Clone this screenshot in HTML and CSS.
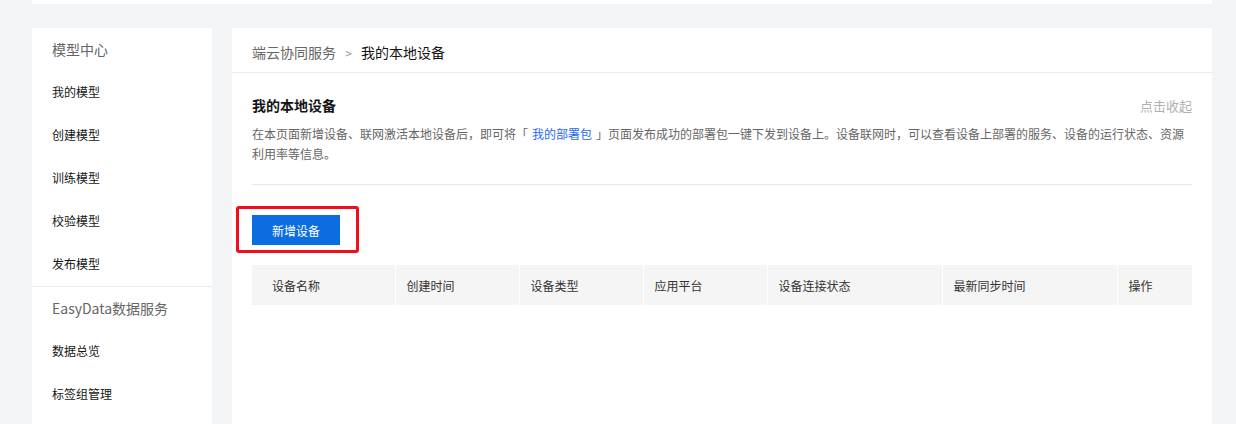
FILE: index.html
```html
<!DOCTYPE html>
<html lang="zh-CN">
<head>
    <meta charset="UTF-8">
    <title>我的本地设备</title>
    <link rel="stylesheet" href="styles.css">
</head>
<body>
    <div class="topbar"></div>

    <div class="layout">
        <aside class="sidebar">
            <div class="nav-title">模型中心</div>
            <div class="nav-item">我的模型</div>
            <div class="nav-item">创建模型</div>
            <div class="nav-item">训练模型</div>
            <div class="nav-item">校验模型</div>
            <div class="nav-item">发布模型</div>
            <div class="nav-title divided">EasyData数据服务</div>
            <div class="nav-item">数据总览</div>
            <div class="nav-item">标签组管理</div>
        </aside>

        <main class="panel">
            <div class="breadcrumb">
                <span class="crumb">端云协同服务</span>
                <span class="sep">&gt;</span>
                <span class="current">我的本地设备</span>
            </div>

            <div class="content">
                <div class="intro">
                    <div class="intro-head">
                        <h2>我的本地设备</h2>
                        <span class="collapse">点击收起</span>
                    </div>
                    <p class="desc"><span>在本页面新增设备、联网激活本地设备后，即可将「</span><a href="#">我的部署包</a><span>」页面发布成功的部署包一键下发到设备上。设备联网时，可以查看设备上部署的服务、设备的运行状态、资源</span><br><span>利用率等信息。</span></p>
                </div>

                <div class="highlight">
                    <button class="btn-primary">新增设备</button>
                </div>

                <table class="devices">
                    <colgroup>
                        <col class="w-name">
                        <col class="w-mid">
                        <col class="w-mid">
                        <col class="w-mid">
                        <col class="w-wide">
                        <col class="w-wide">
                        <col>
                    </colgroup>
                    <thead>
                        <tr>
                            <th class="first">设备名称</th>
                            <th>创建时间</th>
                            <th>设备类型</th>
                            <th>应用平台</th>
                            <th>设备连接状态</th>
                            <th>最新同步时间</th>
                            <th>操作</th>
                        </tr>
                    </thead>
                    <tbody></tbody>
                </table>
            </div>
        </main>
    </div>
</body>
</html>
```

FILE: styles.css
```css
body {
    margin: 0;
    background-color: #f4f5f7;
    font-family: "PingFang SC", "Noto Sans CJK SC", "Noto Sans", sans-serif;
    color: #151515;
    font-size: 12px;
}
.topbar {
    height: 4px;
    margin: 0 24px 0 32px;
    background-color: #fff;
}
.layout {
    display: flex;
    gap: 20px;
    margin: 24px 24px 0 32px;
    height: 396px;
}
.sidebar {
    width: 180px;
    flex-shrink: 0;
    background-color: #fff;
}
.nav-title {
    height: 43px;
    line-height: 43px;
    padding-left: 20px;
    font-size: 14px;
    color: #666;
}
.nav-title.divided {
    border-top: 1px solid #ebebeb;
}
.nav-item {
    height: 43px;
    line-height: 41px;
    padding-left: 20px;
    font-size: 12px;
    color: #151515;
}
.panel {
    flex: 1;
    background-color: #fff;
}
.breadcrumb {
    height: 44px;
    line-height: 48px;
    padding: 0 20px;
    border-bottom: 1px solid #ebebeb;
    font-size: 14px;
}
.crumb {
    color: #666;
}
.sep {
    color: #999;
    font-size: 12px;
    margin: 0 6px;
}
.current {
    color: #151515;
}
.content {
    padding: 0 20px;
}
.intro {
    padding-top: 21px;
    padding-bottom: 20px;
    border-bottom: 1px solid #e8e8e8;
}
.intro-head {
    display: flex;
    justify-content: space-between;
    align-items: center;
    height: 22px;
}
.intro-head h2 {
    margin: 0;
    font-size: 14px;
    font-weight: bold;
    color: #151515;
}
.collapse {
    font-size: 13px;
    color: #b0b0b0;
}
.desc {
    margin: 8px 0 0;
    font-size: 12px;
    line-height: 20px;
    color: #666;
}
.desc a {
    color: #2468f2;
    text-decoration: none;
    margin: 0 4px;
}
.highlight {
    display: inline-block;
    margin: 21px 0 0 -16px;
    padding: 6px 16px 5px 13px;
    border: 3px solid #f20d1c;
    border-radius: 3px;
}
.btn-primary {
    display: block;
    width: 88px;
    height: 30px;
    border: none;
    background-color: #0b6de0;
    color: #fff;
    font-family: inherit;
    font-size: 12px;
    padding: 0;
}
.devices {
    width: 100%;
    margin-top: 12px;
    border-collapse: collapse;
    table-layout: fixed;
}
.w-name { width: 143px; }
.w-mid { width: 124px; }
.w-wide { width: 175px; }
.devices th {
    height: 40px;
    padding: 0 0 0 11px;
    background-color: #f5f5f5;
    border-left: 1px solid #fff;
    text-align: left;
    font-weight: normal;
    color: #333;
    font-size: 12px;
}
.devices th.first {
    padding-left: 20px;
    border-left: none;
}
```
